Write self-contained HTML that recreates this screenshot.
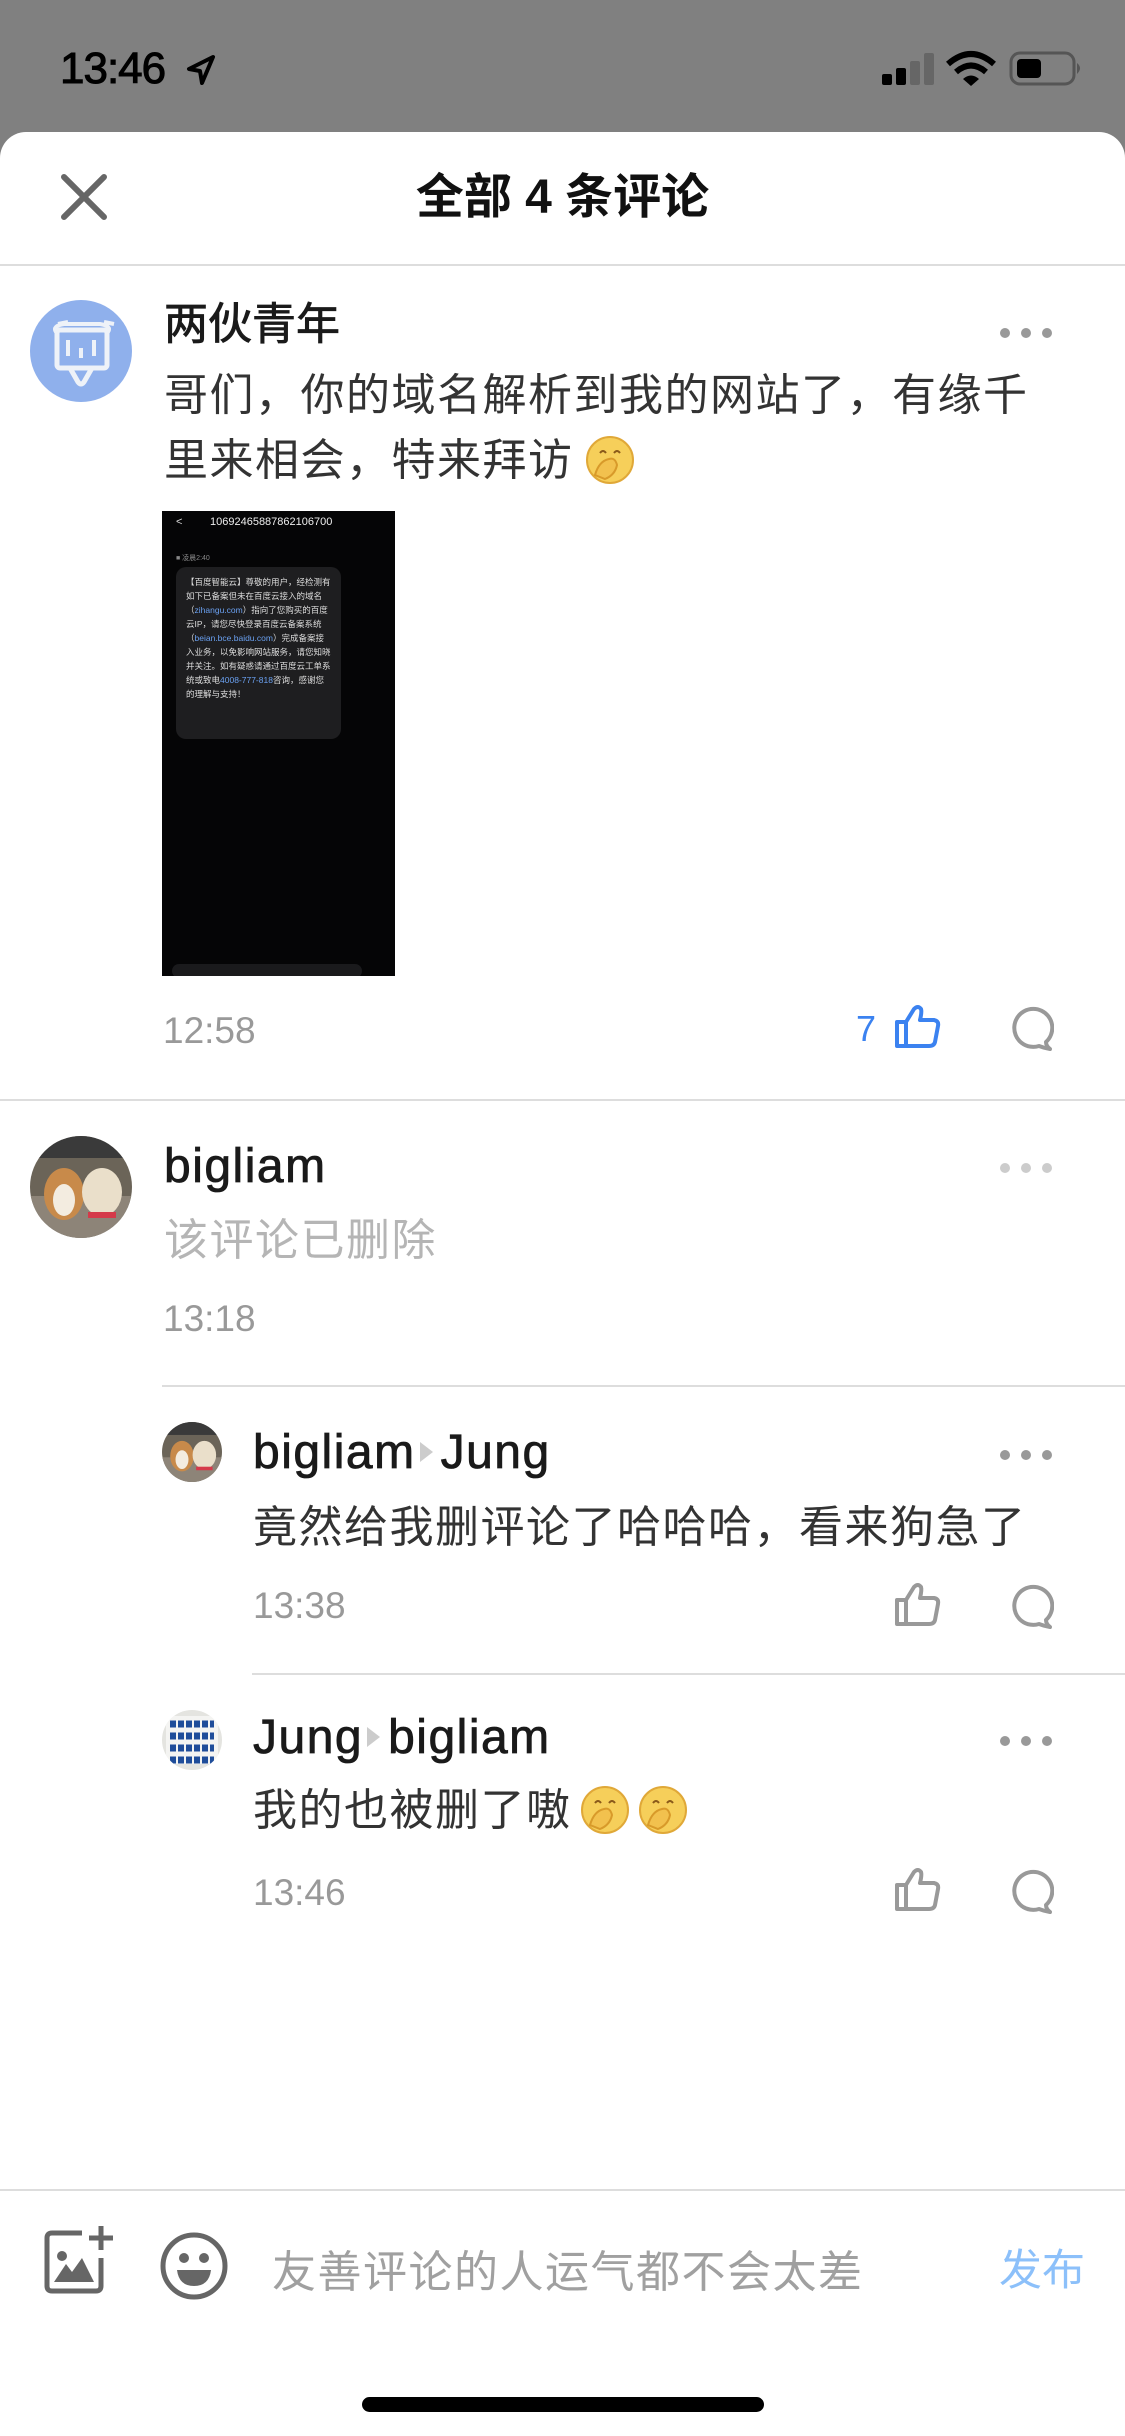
<!DOCTYPE html>
<html><head><meta charset="utf-8"><style>
*{margin:0;padding:0;box-sizing:border-box}
body{width:1125px;height:2436px;position:relative;background:#808080;font-family:"Liberation Sans","Noto Sans CJK SC",sans-serif;overflow:hidden}
.a{position:absolute;white-space:nowrap}
.sheet{position:absolute;left:0;top:132px;width:1125px;height:2304px;background:#fff;border-radius:26px 26px 0 0}
.name{font-size:44px;color:#1a1a1a;-webkit-text-stroke:0.8px #1a1a1a;line-height:50px}
.en{font-size:48px;letter-spacing:1.5px}
.txt{font-size:44px;color:#333;line-height:65px;letter-spacing:1.5px}
.time{font-size:37px;color:#999;line-height:40px}
.hr{position:absolute;height:2px;background:#ddd}
.dots{position:absolute;width:52px;height:10px}
.dots i{position:absolute;top:0;width:10px;height:10px;border-radius:50%;background:#999}
.arr{display:inline-block;width:0;height:0;border-left:13px solid #ccc;border-top:10px solid transparent;border-bottom:10px solid transparent;-webkit-text-stroke:0;vertical-align:6px;margin:0 8px 0 4px}
</style></head><body>
<div class="a" style="left:60px;top:44px;font-size:44px;color:#000;-webkit-text-stroke:1px #000;letter-spacing:-1px">13:46</div>
<svg class="a" style="left:186px;top:54px" width="30" height="32" viewBox="0 0 30 32"><path d="M27 3 L3 15 L14 17 L16 29 Z" fill="none" stroke="#000" stroke-width="4" stroke-linejoin="round"/></svg>
<svg class="a" style="left:880px;top:50px" width="210" height="40" viewBox="0 0 210 40">
<rect x="2" y="24" width="10" height="11" rx="2" fill="#000"/><rect x="16" y="18" width="10" height="17" rx="2" fill="#000"/><rect x="30" y="11" width="10" height="24" rx="2" fill="#666"/><rect x="44" y="3" width="10" height="32" rx="2" fill="#666"/>
<path d="M68 14 Q91 -6 114 14" fill="none" stroke="#000" stroke-width="6"/><path d="M76 22 Q91 9 106 22" fill="none" stroke="#000" stroke-width="6"/><path d="M83 29 L91 36 L99 29 Q91 22 83 29Z" fill="#000"/>
<rect x="131" y="3" width="63" height="31" rx="9" fill="none" stroke="#555" stroke-width="3"/><rect x="137" y="9" width="24" height="19" rx="4" fill="#000"/><path d="M197 13 Q203 18 197 24Z" fill="#555"/>
</svg>
<div class="sheet"></div>
<svg class="a" style="left:60px;top:174px" width="48" height="46" viewBox="0 0 48 46"><path d="M4 3 L44 43 M44 3 L4 43" stroke="#666" stroke-width="6" stroke-linecap="round"/></svg>
<div class="a" style="left:0;width:1125px;text-align:center;top:170px;font-size:48px;font-weight:bold;color:#111;line-height:56px">全部 4 条评论</div>
<div class="hr" style="left:0;top:264px;width:1125px"></div>
<svg class="a" style="left:30px;top:300px" width="102" height="102" viewBox="0 0 102 102"><circle cx="51" cy="51" r="51" fill="#8fb0ec"/>
<path d="M28 24 L38 22 M74 22 L84 24 M26 32 Q22 26 34 24 L70 24 Q82 26 78 32" fill="none" stroke="#eef2f8" stroke-width="4"/>
<rect x="27" y="30" width="50" height="38" rx="3" fill="none" stroke="#eef2f8" stroke-width="5"/>
<path d="M38 40 V56 M51 48 V58 M64 40 V56" stroke="#eef2f8" stroke-width="4"/>
<path d="M40 68 L48 82 Q51 86 54 82 L62 68" fill="none" stroke="#eef2f8" stroke-width="5"/></svg>
<div class="a name" style="left:164px;top:300px">两伙青年</div>
<div class="dots" style="left:1000px;top:328px"><i style="left:0"></i><i style="left:21px"></i><i style="left:42px"></i></div>
<div class="a txt" style="left:164px;top:363px">哥们，你的域名解析到我的网站了，有缘千</div>
<div class="a txt" style="left:164px;top:428px">里来相会，特来拜访</div>
<svg class="a" style="left:585px;top:435px" width="50" height="50" viewBox="0 0 50 50"><circle cx="25" cy="25" r="23" fill="#f6cf5a" stroke="#e0a838" stroke-width="2"/><path d="M15 18 Q18 14 21 18 M29 18 Q32 14 35 18" fill="none" stroke="#8a5a1a" stroke-width="2"/><path d="M10 40 Q14 26 24 24 Q30 22 32 30 Q30 40 20 44Z" fill="#f2c14e" stroke="#d89a2a" stroke-width="2"/></svg>
<div class="a" style="left:162px;top:511px;width:233px;height:465px;background:#050506;overflow:hidden">
 <div class="a" style="left:14px;top:5px;font-size:11px;color:#ddd">&lt;</div>
 <div class="a" style="left:48px;top:5px;font-size:11px;color:#eee">10692465887862106700</div>
 <div class="a" style="left:14px;top:42px;font-size:7px;color:#888">■ 凌晨2:40</div>
 <div class="a" style="left:14px;top:56px;width:165px;height:172px;background:#1e1e20;border-radius:10px;padding:8px 10px;white-space:normal;font-size:8.5px;line-height:14px;color:#ddd">【百度智能云】尊敬的用户，经检测有如下已备案但未在百度云接入的域名（<span style="color:#6aa0f0">zihangu.com</span>）指向了您购买的百度云IP，请您尽快登录百度云备案系统（<span style="color:#6aa0f0">beian.bce.baidu.com</span>）完成备案接入业务，以免影响网站服务，请您知晓并关注。如有疑惑请通过百度云工单系统或致电<span style="color:#6aa0f0">4008-777-818</span>咨询，感谢您的理解与支持！</div>
 <div class="a" style="left:10px;top:453px;width:190px;height:14px;background:#1a1a1c;border-radius:7px"></div>
</div>
<div class="a time" style="left:163px;top:1011px">12:58</div>
<div class="a" style="left:856px;top:1008px;font-size:36px;color:#3b82f0">7</div>
<svg class="a" style="left:894px;top:1004px" width="48" height="46" viewBox="0 0 48 46"><path d="M3 18 H12 V42 H3 Z M12 18 L20 5 Q24 1 27 5 Q28 8 26 16 L40 16 Q45 17 44 22 L41 38 Q40 42 35 42 L12 42" fill="none" stroke="#3b82f0" stroke-width="4" stroke-linejoin="round"/></svg>
<svg class="a" style="left:1008px;top:1006px" width="46" height="46" viewBox="0 0 46 46"><path d="M38 36 A19 19 0 1 0 31 40 Q36 42 42 43 Q38 40 38 36Z" fill="none" stroke="#999" stroke-width="4" stroke-linejoin="round"/></svg>
<div class="hr" style="left:0;top:1099px;width:1125px"></div>
<svg class="a" style="left:30px;top:1136px" width="102" height="102" viewBox="0 0 102 102"><defs><clipPath id="c1"><circle cx="51" cy="51" r="51"/></clipPath></defs><g clip-path="url(#c1)"><rect width="102" height="102" fill="#6b6458"/><rect x="0" y="60" width="102" height="42" fill="#8d8478"/><ellipse cx="34" cy="58" rx="20" ry="26" fill="#c88a4a"/><ellipse cx="34" cy="64" rx="11" ry="16" fill="#f3ece0"/><ellipse cx="72" cy="56" rx="20" ry="24" fill="#eadfca"/><rect x="58" y="76" width="28" height="6" fill="#d53a4a"/><rect x="0" y="0" width="102" height="22" fill="#3a3a3a"/></g></svg>
<div class="a name en" style="left:164px;top:1142px">bigliam</div>
<div class="dots" style="left:1000px;top:1163px"><i style="left:0;background:#ccc"></i><i style="left:21px;background:#ccc"></i><i style="left:42px;background:#ccc"></i></div>
<div class="a txt" style="left:164px;top:1208px;color:#b5b5b5">该评论已删除</div>
<div class="a time" style="left:163px;top:1299px">13:18</div>
<div class="hr" style="left:162px;top:1385px;width:963px"></div>
<svg class="a" style="left:162px;top:1422px" width="60" height="60" viewBox="0 0 102 102"><g clip-path="url(#c1)"><rect width="102" height="102" fill="#6b6458"/><rect x="0" y="60" width="102" height="42" fill="#8d8478"/><ellipse cx="34" cy="58" rx="20" ry="26" fill="#c88a4a"/><ellipse cx="34" cy="64" rx="11" ry="16" fill="#f3ece0"/><ellipse cx="72" cy="56" rx="20" ry="24" fill="#eadfca"/><rect x="58" y="76" width="28" height="6" fill="#d53a4a"/><rect x="0" y="0" width="102" height="22" fill="#3a3a3a"/></g></svg>
<div class="a name en" style="left:253px;top:1428px">bigliam<span class="arr"></span>Jung</div>
<div class="dots" style="left:1000px;top:1450px"><i style="left:0"></i><i style="left:21px"></i><i style="left:42px"></i></div>
<div class="a txt" style="left:253px;top:1495px">竟然给我删评论了哈哈哈，看来狗急了</div>
<div class="a time" style="left:253px;top:1586px">13:38</div>
<svg class="a" style="left:894px;top:1582px" width="48" height="46" viewBox="0 0 48 46"><path d="M3 18 H12 V42 H3 Z M12 18 L20 5 Q24 1 27 5 Q28 8 26 16 L40 16 Q45 17 44 22 L41 38 Q40 42 35 42 L12 42" fill="none" stroke="#999" stroke-width="4" stroke-linejoin="round"/></svg>
<svg class="a" style="left:1008px;top:1584px" width="46" height="46" viewBox="0 0 46 46"><path d="M38 36 A19 19 0 1 0 31 40 Q36 42 42 43 Q38 40 38 36Z" fill="none" stroke="#999" stroke-width="4" stroke-linejoin="round"/></svg>
<div class="hr" style="left:252px;top:1673px;width:873px"></div>
<svg class="a" style="left:162px;top:1710px" width="60" height="60" viewBox="0 0 60 60"><defs><clipPath id="c2"><circle cx="30" cy="30" r="30"/></clipPath></defs><g clip-path="url(#c2)"><rect width="60" height="60" fill="#e4e4e0"/><rect x="4" y="6" width="52" height="48" fill="#f4f4f2"/><path d="M8 14h44M8 26h44M8 38h44M8 50h44" stroke="#1f4d9a" stroke-width="7" stroke-dasharray="6 2"/></g></svg>
<div class="a name en" style="left:253px;top:1713px">Jung<span class="arr"></span>bigliam</div>
<div class="dots" style="left:1000px;top:1736px"><i style="left:0"></i><i style="left:21px"></i><i style="left:42px"></i></div>
<div class="a txt" style="left:253px;top:1778px">我的也被删了嗷</div>
<svg class="a" style="left:580px;top:1785px" width="50" height="50" viewBox="0 0 50 50"><circle cx="25" cy="25" r="23" fill="#f6cf5a" stroke="#e0a838" stroke-width="2"/><path d="M15 18 Q18 14 21 18 M29 18 Q32 14 35 18" fill="none" stroke="#8a5a1a" stroke-width="2"/><path d="M10 40 Q14 26 24 24 Q30 22 32 30 Q30 40 20 44Z" fill="#f2c14e" stroke="#d89a2a" stroke-width="2"/></svg>
<svg class="a" style="left:638px;top:1785px" width="50" height="50" viewBox="0 0 50 50"><circle cx="25" cy="25" r="23" fill="#f6cf5a" stroke="#e0a838" stroke-width="2"/><path d="M15 18 Q18 14 21 18 M29 18 Q32 14 35 18" fill="none" stroke="#8a5a1a" stroke-width="2"/><path d="M10 40 Q14 26 24 24 Q30 22 32 30 Q30 40 20 44Z" fill="#f2c14e" stroke="#d89a2a" stroke-width="2"/></svg>
<div class="a time" style="left:253px;top:1873px">13:46</div>
<svg class="a" style="left:894px;top:1867px" width="48" height="46" viewBox="0 0 48 46"><path d="M3 18 H12 V42 H3 Z M12 18 L20 5 Q24 1 27 5 Q28 8 26 16 L40 16 Q45 17 44 22 L41 38 Q40 42 35 42 L12 42" fill="none" stroke="#999" stroke-width="4" stroke-linejoin="round"/></svg>
<svg class="a" style="left:1008px;top:1869px" width="46" height="46" viewBox="0 0 46 46"><path d="M38 36 A19 19 0 1 0 31 40 Q36 42 42 43 Q38 40 38 36Z" fill="none" stroke="#999" stroke-width="4" stroke-linejoin="round"/></svg>
<div class="hr" style="left:0;top:2189px;width:1125px"></div>
<svg class="a" style="left:44px;top:2224px" width="70" height="70" viewBox="0 0 70 70"><path d="M38 9 H8 Q3 9 3 14 V62 Q3 67 8 67 H52 Q57 67 57 62 V34" fill="none" stroke="#666" stroke-width="5"/><path d="M57 2 V26 M45 14 H69" stroke="#666" stroke-width="5"/><circle cx="18" cy="32" r="5" fill="#666"/><path d="M10 58 L22 40 L28 48 L38 34 L50 58Z" fill="#666"/></svg>
<svg class="a" style="left:159px;top:2232px" width="70" height="68" viewBox="0 0 70 68"><ellipse cx="35" cy="34" rx="31" ry="31" fill="none" stroke="#666" stroke-width="5"/><circle cx="25" cy="26" r="5" fill="#666"/><circle cx="45" cy="26" r="5" fill="#666"/><path d="M18 38 H52 Q50 54 35 54 Q20 54 18 38Z" fill="#666"/></svg>
<div class="a" style="left:272px;top:2236px;font-size:44px;color:#a0a0a0;letter-spacing:1.5px">友善评论的人运气都不会太差</div>
<div class="a" style="left:999px;top:2236px;font-size:43px;color:#8cc0fa">发布</div>
<div class="a" style="left:362px;top:2397px;width:402px;height:15px;border-radius:8px;background:#000"></div>
</body></html>
